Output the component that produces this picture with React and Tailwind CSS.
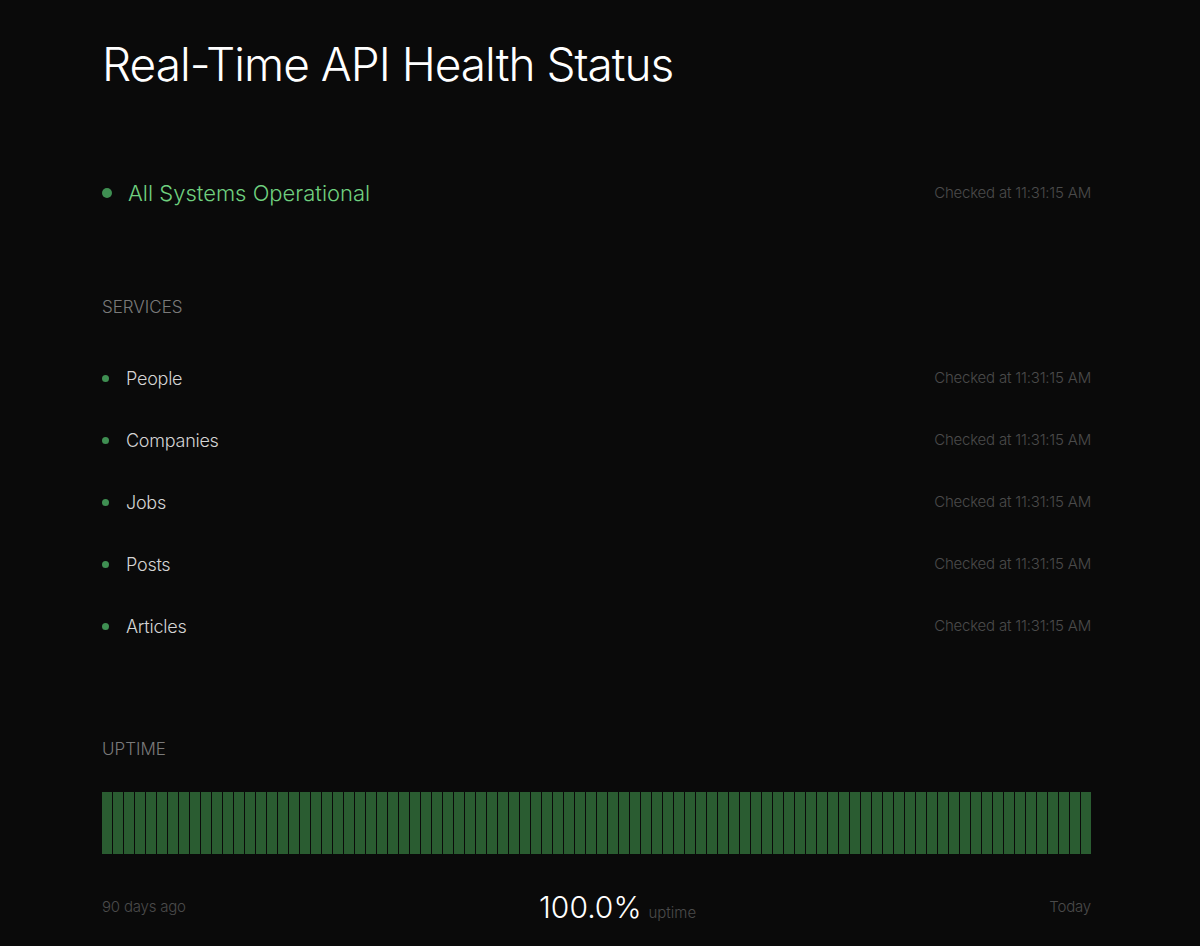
import React from 'react';

const services = ['People', 'Companies', 'Jobs', 'Posts', 'Articles'];
const checkedAt = '11:31:15 AM';
const days = Array.from({ length: 90 }, (_, i) => i);

function ServiceRow({ name }) {
  return (
    <div className="flex items-center justify-between h-[62px]">
      <div className="flex items-center">
        <span className="w-[7px] h-[7px] rounded-full bg-[#3f8f52] mr-[17px]" />
        <span className="text-[18px] text-[#d4d4d4] font-light tracking-[-0.25px]">{name}</span>
      </div>
      <span className="text-[15px] text-[#4b4b4b] font-light tracking-[-0.2px]">Checked at {checkedAt}</span>
    </div>
  );
}

export default function App() {
  return (
    <div className="min-h-screen bg-[#0a0a0a]" style={{ fontFamily: 'Inter, "Noto Sans", sans-serif' }}>
      <div className="ml-[102px] w-[989px] pt-[38px]">
        <h1 className="text-[46px] leading-[52px] font-light text-white tracking-[-1px]">
          Real-Time API Health Status
        </h1>

        {/* overall status */}
        <div className="flex items-center justify-between mt-[78px] h-[50px]">
          <div className="flex items-center">
            <span className="w-[10px] h-[10px] rounded-full bg-[#3f8f52] mr-[16px]" />
            <span className="text-[22px] text-[#6fd07f] font-light">All Systems Operational</span>
          </div>
          <span className="text-[15px] text-[#4b4b4b] font-light tracking-[-0.2px]">Checked at {checkedAt}</span>
        </div>

        {/* services */}
        <div className="mt-[77px]">
          <h2 className="text-[17px] leading-[24px] text-[#7a7a7a] font-light uppercase">Services</h2>
          <div className="mt-[28px]">
            {services.map((s) => (
              <ServiceRow key={s} name={s} />
            ))}
          </div>
        </div>

        {/* uptime */}
        <div className="mt-[80px]">
          <h2 className="text-[17px] leading-[24px] text-[#7a7a7a] font-light uppercase">Uptime</h2>
          <div className="flex gap-px h-[62px] mt-[31px]">
            {days.map((d) => (
              <div key={d} className="flex-1 bg-[#2a5c31]" />
            ))}
          </div>
          <div className="flex items-center justify-between mt-[31px]">
            <span className="text-[15px] text-[#4b4b4b] font-light tracking-[-0.2px]">90 days ago</span>
            <div className="flex items-baseline">
              <span className="text-[30px] text-white font-light">100.0%</span>
              <span className="text-[15px] text-[#4b4b4b] font-light ml-[7px]">uptime</span>
            </div>
            <span className="text-[15px] text-[#4b4b4b] font-light tracking-[-0.2px]">Today</span>
          </div>
        </div>
      </div>
    </div>
  );
}
